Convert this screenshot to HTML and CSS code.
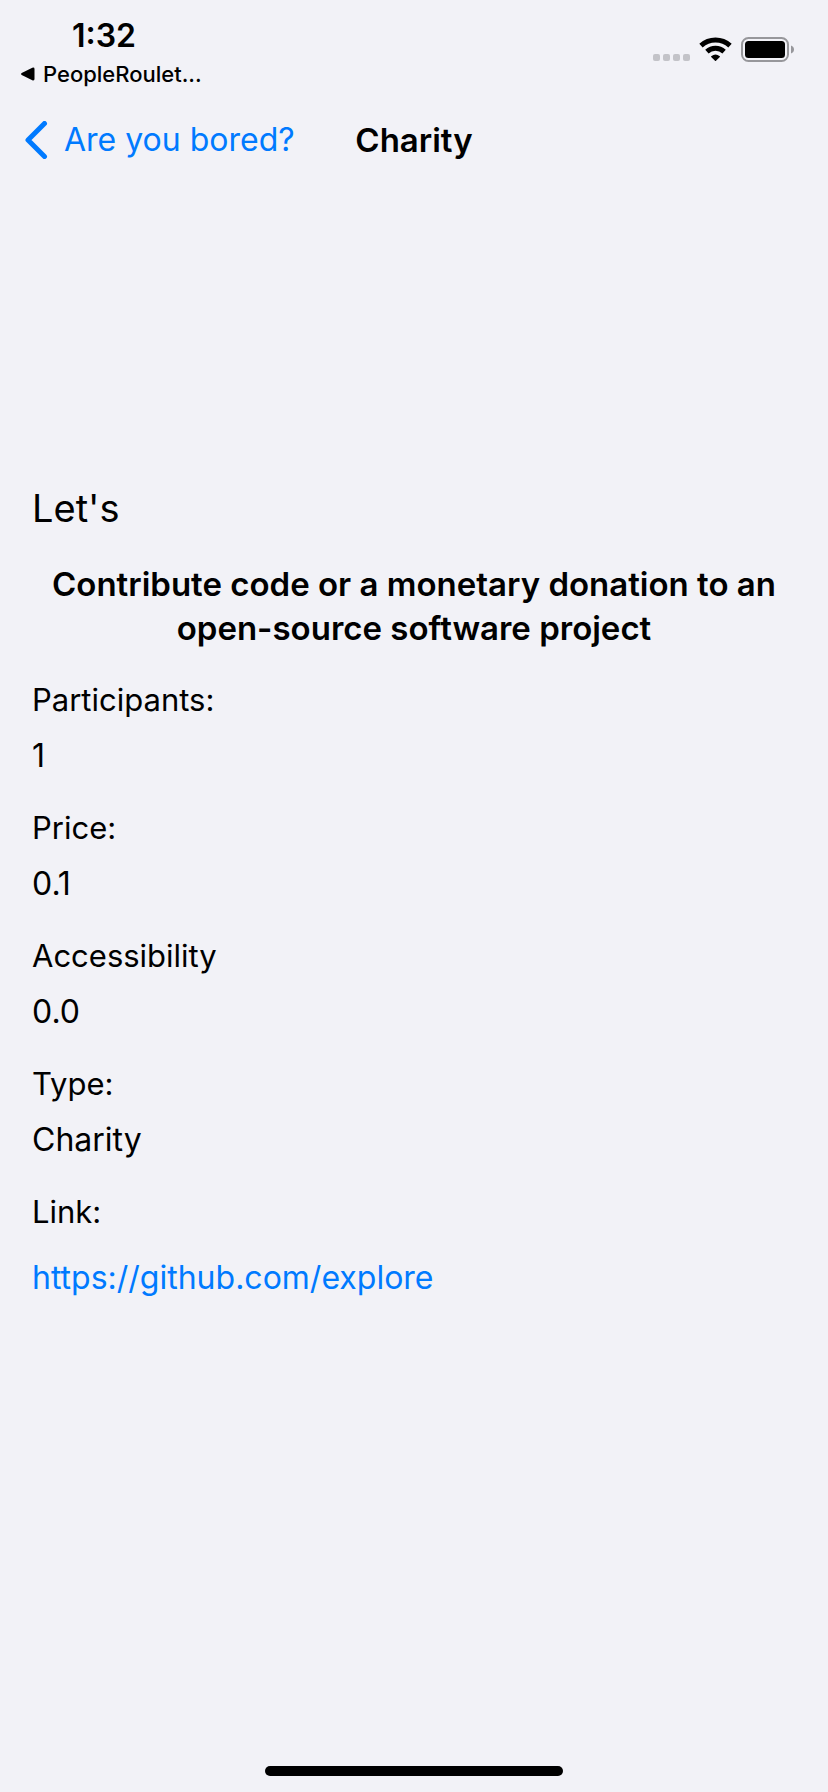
FILE: index.html
```html
<!DOCTYPE html>
<html lang="en">
<head>
<meta charset="utf-8">
<meta name="viewport" content="width=device-width, initial-scale=1">
<title>Charity</title>
<link rel="stylesheet" href="styles.css">
</head>
<body class="screen">
<header class="status">
  <div class="status-left">
    <time class="clock">1:32</time>
    <button class="return-app" type="button">
      <svg class="return-icon" viewBox="0 0 14 14" aria-hidden="true"><path d="M1.2 6 11.8.7Q14 0 14 2V12Q14 14 11.8 13.3L1.2 8Q-.4 7 1.2 6Z"/></svg>
      <span>PeopleRoulet...</span>
    </button>
  </div>
  <svg class="status-icons" viewBox="0 0 142 26" aria-hidden="true">
    <g fill="#c3c3c8"><rect x="0" y="17" width="7" height="7" rx="2"/><rect x="10" y="17" width="7" height="7" rx="2"/><rect x="20" y="17" width="7" height="7" rx="2"/><rect x="30" y="17" width="7" height="7" rx="2"/></g>
    <g fill="none" stroke="#000" stroke-width="5"><path d="M48 8.6A21.5 21.5 0 0 1 77 8.6"/><path d="M53.9 14.6A12.8 12.8 0 0 1 71.1 14.6"/></g>
    <path d="M58.2 19.3Q62.5 15.6 66.8 19.3Q67.2 19.7 66.8 20.1L63 23.7Q62.5 24.1 62 23.7L58.2 20.1Q57.8 19.7 58.2 19.3Z"/>
    <rect x="89" y="1" width="46" height="23" rx="6.5" fill="none" stroke="#97979b" stroke-width="2"/>
    <rect x="92" y="4" width="40" height="17" rx="3.5"/>
    <path d="M138 8.5Q141 9.6 141 12.5T138 16.500Z" fill="#97979b"/>
  </svg>
</header>
<nav class="nav">
  <button class="back" type="button">
    <svg class="chevron" viewBox="0 0 24 38" aria-hidden="true"><path d="M20.500 2.500 4 19 20.500 35.500" fill="none" stroke="currentColor" stroke-width="5" stroke-linecap="round" stroke-linejoin="round"/></svg>
    <span>Are you bored?</span>
  </button>
  <h1 class="nav-title">Charity</h1>
</nav>
<main class="content">
  <p class="lead">Let's</p>
  <h2 class="activity">Contribute code or a monetary donation to an open-source software project</h2>
  <dl class="details">
    <div class="detail"><dt>Participants:</dt><dd>1</dd></div>
    <div class="detail"><dt>Price:</dt><dd>0.1</dd></div>
    <div class="detail"><dt>Accessibility</dt><dd>0.0</dd></div>
    <div class="detail"><dt>Type:</dt><dd>Charity</dd></div>
    <div class="detail detail-link"><dt>Link:</dt><dd><a class="link" href="https://github.com/explore">https://github.com/explore</a></dd></div>
  </dl>
</main>
<div class="home-bar"></div>
</body>
</html>
```
FILE: styles.css
```css
* { box-sizing: border-box; margin: 0; padding: 0; }

.screen {
  display: flex;
  flex-direction: column;
  min-height: 100vh;
  background: #f2f2f7;
  color: #000;
  font-family: Inter, "Liberation Sans", sans-serif;
}

button { border: 0; background: none; color: inherit; font: inherit; }

.status {
  display: flex;
  justify-content: space-between;
  align-items: flex-start;
  padding: 16px 33px 0 20px;
}
.status-left { display: flex; flex-direction: column; }
.clock {
  padding-left: 52px;
  font-size: 32px;
  font-weight: 600;
  line-height: 40px;
}
.return-app {
  display: flex;
  align-items: center;
  gap: 8px;
  font-size: 22px;
  font-weight: 500;
  line-height: 36px;
}
.return-icon { width: 15px; height: 14px; }
.status-icons { width: 142px; height: 26px; margin-top: 21px; }

.nav {
  display: grid;
  grid-template-columns: 1fr auto 1fr;
  align-items: center;
  height: 96px;
  padding: 0 24px;
}
.back {
  display: flex;
  align-items: center;
  gap: 16px;
  color: #007aff;
  font-size: 32px;
  line-height: 42px;
  white-space: nowrap;
}
.chevron { width: 24px; height: 38px; }
.nav-title { font-size: 33px; font-weight: 600; line-height: 42px; }

.content { flex: 1; padding: 296px 32px 0; }
.lead { font-size: 38px; line-height: 48px; }
.activity {
  margin: 30px 0 31px;
  font-size: 33px;
  font-weight: 600;
  line-height: 44px;
  text-align: center;
}
.details { display: flex; flex-direction: column; gap: 32px; }
.detail { display: flex; flex-direction: column; gap: 16px; }
.detail-link { gap: 26px; }
.detail dt { font-size: 31px; line-height: 38px; }
.detail dd { font-size: 32px; line-height: 42px; }
.link { color: #007aff; text-decoration: none; }

.home-bar {
  align-self: center;
  width: 36%;
  height: 10px;
  margin-bottom: 16px;
  border-radius: 5px;
  background: #000;
}
```
